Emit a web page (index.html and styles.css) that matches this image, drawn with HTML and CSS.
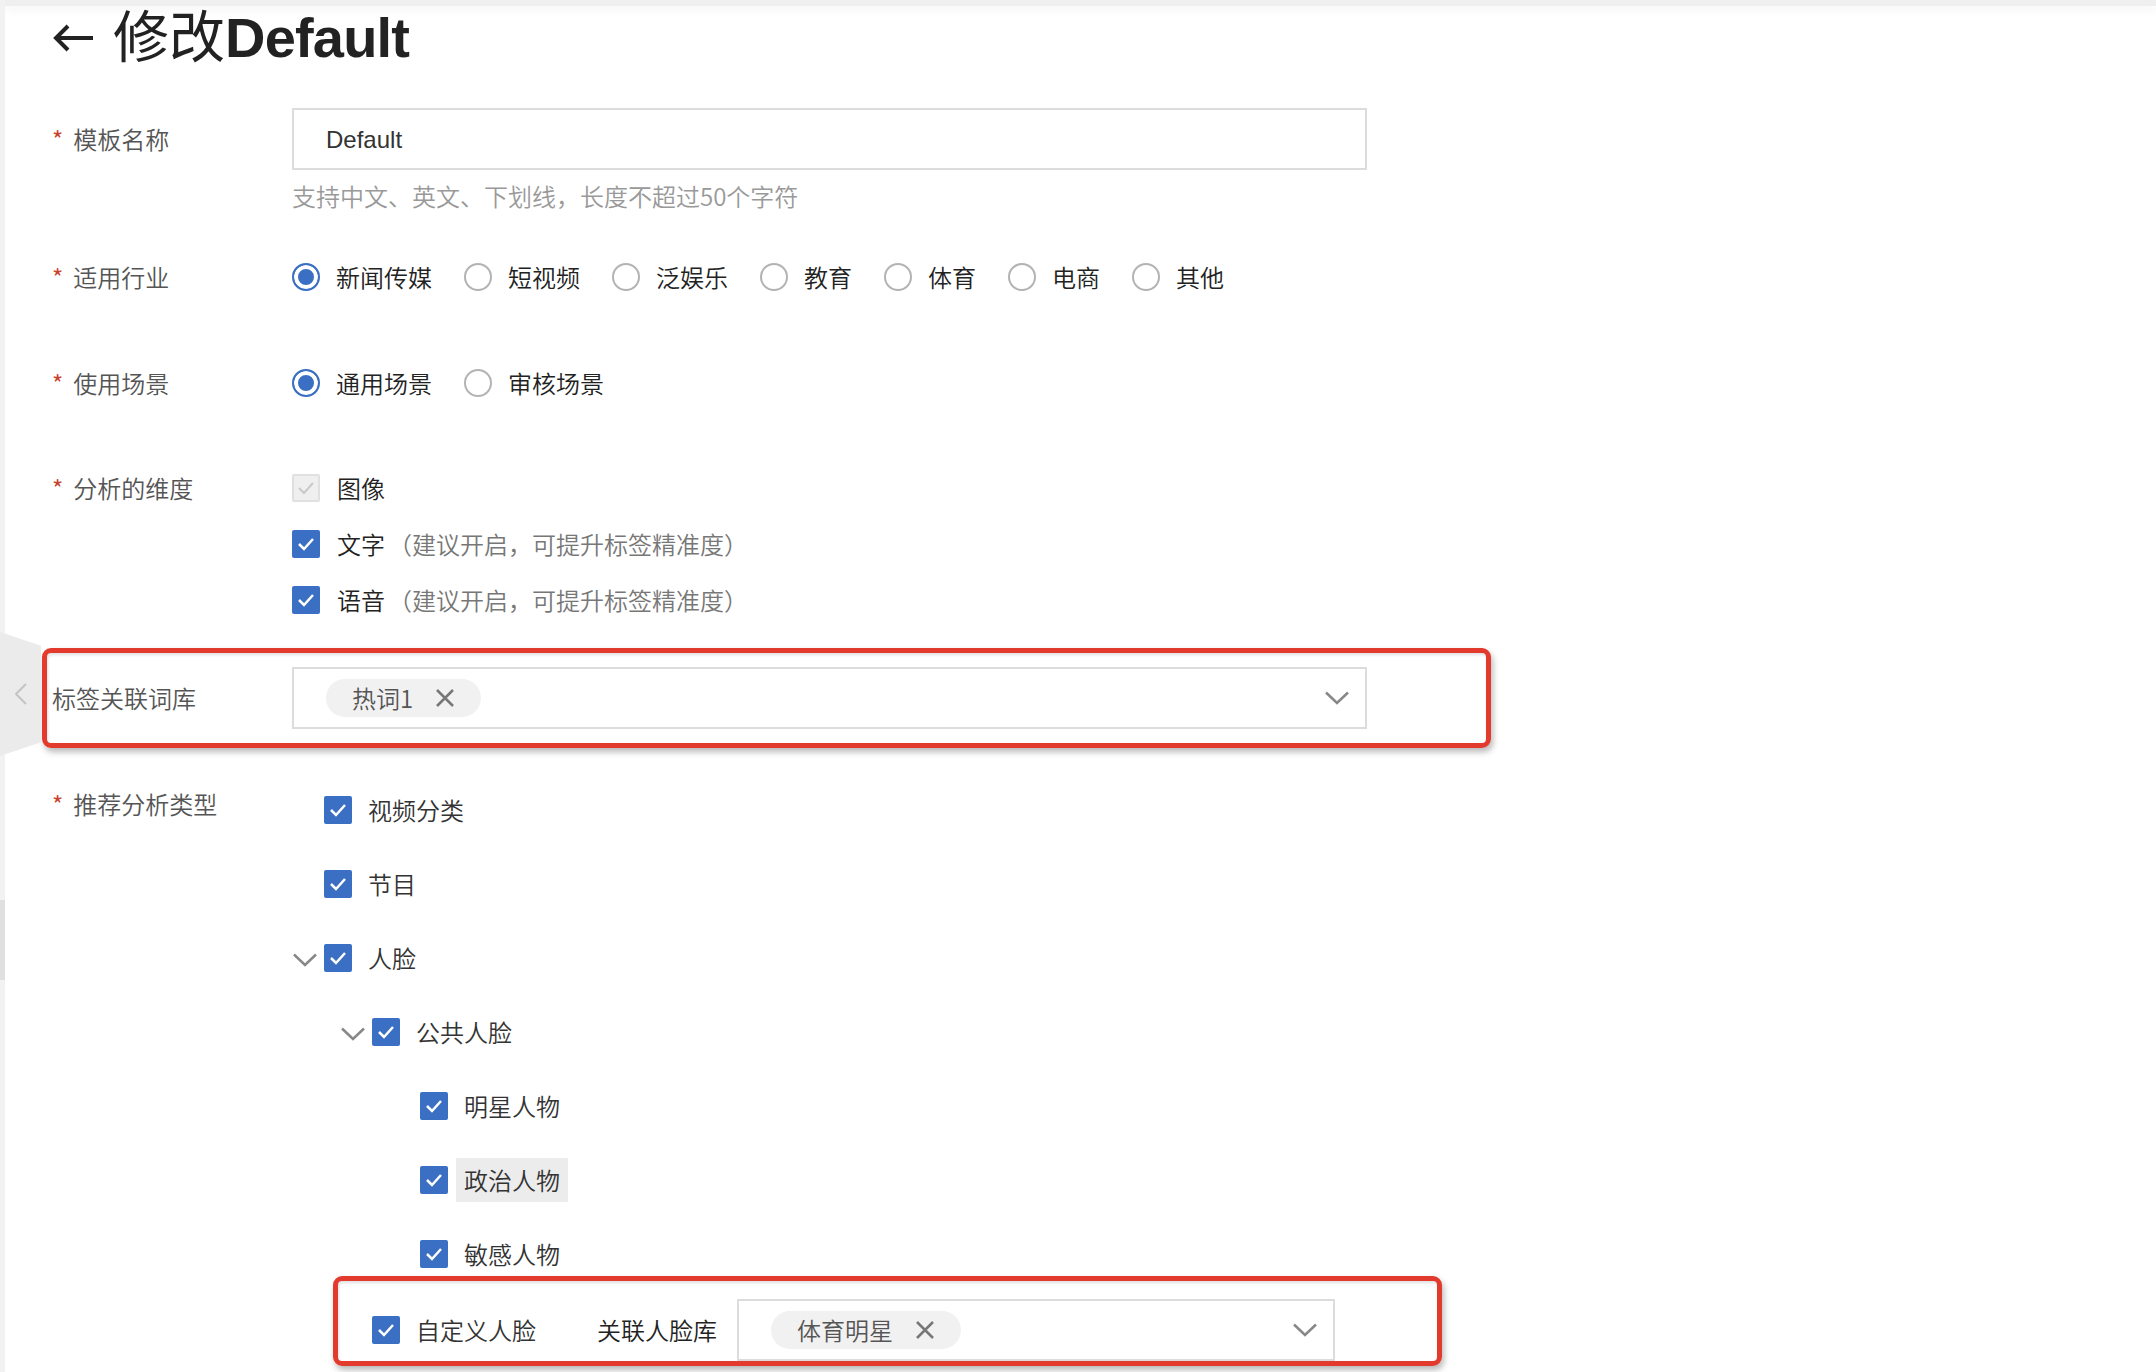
FILE: index.html
```html
<!DOCTYPE html>
<html lang="zh-CN">
<head>
<meta charset="utf-8">
<title>修改Default</title>
<link rel="stylesheet" href="styles.css">
</head>
<body>
<div class="app">
  <aside class="rail">
    <div class="rail-thumb"></div>
    <button class="rail-toggle" type="button" aria-label="收起">
      <svg width="12" height="22" viewBox="0 0 12 22"><polyline points="11,1 1,11 11,21" fill="none" stroke="#c4c4c4" stroke-width="2"/></svg>
    </button>
  </aside>
  <main class="page">
    <div class="topbar"></div>
    <header class="page-header">
      <svg class="back" viewBox="0 0 42 30"><path d="M41 15H4M16 3L4 15L16 27" fill="none" stroke="#222" stroke-width="4"/></svg>
      <h1 class="page-title"><span class="title-cn">修改</span><span class="title-en">Default</span></h1>
    </header>

    <form class="form">
      <div class="form-item item-name">
        <label class="form-label"><span class="req">*</span>模板名称</label>
        <div class="form-control">
          <div class="input">Default</div>
          <div class="help">支持中文、英文、下划线，长度不超过50个字符</div>
        </div>
      </div>

      <div class="form-item item-line item-industry">
        <label class="form-label"><span class="req">*</span>适用行业</label>
        <div class="radio-group">
          <span class="radio checked"><span class="radio-dot"></span>新闻传媒</span>
          <span class="radio"><span class="radio-dot"></span>短视频</span>
          <span class="radio"><span class="radio-dot"></span>泛娱乐</span>
          <span class="radio"><span class="radio-dot"></span>教育</span>
          <span class="radio"><span class="radio-dot"></span>体育</span>
          <span class="radio"><span class="radio-dot"></span>电商</span>
          <span class="radio"><span class="radio-dot"></span>其他</span>
        </div>
      </div>

      <div class="form-item item-line item-scene">
        <label class="form-label"><span class="req">*</span>使用场景</label>
        <div class="radio-group">
          <span class="radio checked"><span class="radio-dot"></span>通用场景</span>
          <span class="radio"><span class="radio-dot"></span>审核场景</span>
        </div>
      </div>

      <div class="form-item item-dim">
        <label class="form-label"><span class="req">*</span>分析的维度</label>
        <div class="check-list">
          <div class="check"><span class="cb disabled"><svg viewBox="0 0 18 14"><polyline points="2,7 7,12 16,2" fill="none" stroke="#c9c9c9" stroke-width="2"/></svg></span>图像</div>
          <div class="check"><span class="cb"><svg viewBox="0 0 18 14"><polyline points="2,7 7,12 16,2" fill="none" stroke="#fff" stroke-width="2.5"/></svg></span>文字<span class="hint">（建议开启，可提升标签精准度）</span></div>
          <div class="check"><span class="cb"><svg viewBox="0 0 18 14"><polyline points="2,7 7,12 16,2" fill="none" stroke="#fff" stroke-width="2.5"/></svg></span>语音<span class="hint">（建议开启，可提升标签精准度）</span></div>
        </div>
      </div>

      <div class="form-item item-lib marked">
        <label class="form-label">标签关联词库</label>
        <div class="select">
          <span class="tag">热词1<svg viewBox="0 0 20 20"><path d="M2 2L18 18M18 2L2 18" fill="none" stroke="#777" stroke-width="2.5"/></svg></span>
          <svg class="select-arrow" viewBox="0 0 24 14"><polyline points="1,1.5 12,12 23,1.5" fill="none" stroke="#888" stroke-width="2.5"/></svg>
        </div>
      </div>

      <div class="form-item item-rec">
        <label class="form-label"><span class="req">*</span>推荐分析类型</label>
        <div class="tree">
          <div class="tree-node">
            <span class="switcher"></span>
            <span class="cb"><svg viewBox="0 0 18 14"><polyline points="2,7 7,12 16,2" fill="none" stroke="#fff" stroke-width="2.5"/></svg></span>
            <span class="node-title">视频分类</span>
          </div>
          <div class="tree-node">
            <span class="switcher"></span>
            <span class="cb"><svg viewBox="0 0 18 14"><polyline points="2,7 7,12 16,2" fill="none" stroke="#fff" stroke-width="2.5"/></svg></span>
            <span class="node-title">节目</span>
          </div>
          <div class="tree-node">
            <span class="switcher"><svg viewBox="0 0 24 14"><polyline points="1,1.5 12,12 23,1.5" fill="none" stroke="#888" stroke-width="2.5"/></svg></span>
            <span class="cb"><svg viewBox="0 0 18 14"><polyline points="2,7 7,12 16,2" fill="none" stroke="#fff" stroke-width="2.5"/></svg></span>
            <span class="node-title">人脸</span>
          </div>
          <div class="tree-node lvl-1">
            <span class="switcher"><svg viewBox="0 0 24 14"><polyline points="1,1.5 12,12 23,1.5" fill="none" stroke="#888" stroke-width="2.5"/></svg></span>
            <span class="cb"><svg viewBox="0 0 18 14"><polyline points="2,7 7,12 16,2" fill="none" stroke="#fff" stroke-width="2.5"/></svg></span>
            <span class="node-title">公共人脸</span>
          </div>
          <div class="tree-node lvl-2">
            <span class="switcher"></span>
            <span class="cb"><svg viewBox="0 0 18 14"><polyline points="2,7 7,12 16,2" fill="none" stroke="#fff" stroke-width="2.5"/></svg></span>
            <span class="node-title">明星人物</span>
          </div>
          <div class="tree-node lvl-2">
            <span class="switcher"></span>
            <span class="cb"><svg viewBox="0 0 18 14"><polyline points="2,7 7,12 16,2" fill="none" stroke="#fff" stroke-width="2.5"/></svg></span>
            <span class="node-title active">政治人物</span>
          </div>
          <div class="tree-node lvl-2">
            <span class="switcher"></span>
            <span class="cb"><svg viewBox="0 0 18 14"><polyline points="2,7 7,12 16,2" fill="none" stroke="#fff" stroke-width="2.5"/></svg></span>
            <span class="node-title">敏感人物</span>
          </div>
          <div class="tree-node lvl-1 custom marked">
            <span class="switcher"></span>
            <span class="cb"><svg viewBox="0 0 18 14"><polyline points="2,7 7,12 16,2" fill="none" stroke="#fff" stroke-width="2.5"/></svg></span>
            <span class="node-title">自定义人脸</span>
            <span class="custom-label">关联人脸库</span>
            <div class="select select-small">
              <span class="tag">体育明星<svg viewBox="0 0 20 20"><path d="M2 2L18 18M18 2L2 18" fill="none" stroke="#777" stroke-width="2.5"/></svg></span>
              <svg class="select-arrow" viewBox="0 0 24 14"><polyline points="1,1.5 12,12 23,1.5" fill="none" stroke="#888" stroke-width="2.5"/></svg>
            </div>
          </div>
        </div>
      </div>
    </form>
  </main>
</div>
</body>
</html>
```

FILE: styles.css
```css
* {
  box-sizing: border-box;
}

html,
body {
  margin: 0;
  padding: 0;
}

body {
  background: #fff;
  font-family: "Noto Sans CJK SC", "Liberation Sans", sans-serif;
  font-size: 24px;
  font-weight: 350;
  color: #222;
  overflow: hidden;
  height: 1372px;
}

.app {
  display: flex;
  min-height: 1372px;
}

/* left rail */
.rail {
  width: 5px;
  flex: none;
  background: #f2f2f2;
  position: relative;
}

.rail-thumb {
  margin-top: 900px;
  height: 80px;
  background: #e0e0e0;
}

.rail-toggle {
  position: absolute;
  left: 0;
  top: 632px;
  width: 41px;
  height: 124px;
  border: 0;
  padding: 0;
  background: #ebebeb;
  clip-path: polygon(0 0, 100% 11%, 100% 89%, 0 100%);
  display: flex;
  align-items: center;
  justify-content: center;
  z-index: 2;
}

/* page */
.page {
  flex: 1;
  padding-left: 47px;
}

.topbar {
  height: 6px;
  margin-left: -47px;
  background: #efefef;
  box-shadow: 0 4px 10px rgba(0, 0, 0, 0.05);
}

.page-header {
  height: 64px;
  display: flex;
  align-items: center;
  gap: 19px;
}

.back {
  width: 42px;
  height: 30px;
  flex: none;
}

.page-title {
  margin: 0;
  font-family: "Liberation Sans", "Noto Sans CJK SC", sans-serif;
  font-size: 56px;
  line-height: 64px;
  font-weight: 400;
  color: #222;
  white-space: nowrap;
}

.title-en {
  font-weight: 700;
  letter-spacing: -0.8px;
}

/* form */
.form-item {
  display: flex;
  align-items: flex-start;
}

.form-label {
  width: 240px;
  flex: none;
  color: #555;
  white-space: nowrap;
}

.req {
  font-weight: 400;
  color: #c8432f;
  margin-right: 10px;
}

.item-name {
  margin-top: 38px;
}

.item-name .form-label,
.item-lib .form-label {
  line-height: 62px;
}

.input {
  width: 1075px;
  height: 62px;
  border: 2px solid #dcdcdc;
  padding: 0 32px;
  line-height: 60px;
  font-family: "Liberation Sans", sans-serif;
  font-weight: 400;
  color: #333;
}

.help {
  margin-top: 8px;
  line-height: 36px;
  color: #999;
}

.item-line {
  line-height: 36px;
}

.item-industry {
  margin-top: 45px;
}

.item-scene {
  margin-top: 70px;
}

.radio-group {
  display: flex;
  align-items: center;
}

.radio {
  display: flex;
  align-items: center;
  margin-right: 32px;
  color: #222;
}

.radio-dot {
  width: 28px;
  height: 28px;
  flex: none;
  border: 2px solid #b3b3b3;
  border-radius: 50%;
  margin-right: 16px;
}

.radio.checked .radio-dot {
  border-color: #3a6fc4;
  background: #3a6fc4;
  box-shadow: inset 0 0 0 4px #fff;
}

.item-dim {
  margin-top: 59px;
  line-height: 56px;
}

.check {
  display: flex;
  align-items: center;
  height: 56px;
  color: #222;
}

.cb {
  width: 28px;
  height: 28px;
  flex: none;
  background: #3a6fc4;
  border-radius: 2px;
  display: flex;
  align-items: center;
  justify-content: center;
}

.cb svg {
  width: 18px;
  height: 14px;
}

.cb.disabled {
  background: #efefef;
  border: 2px solid #e0e0e0;
}

.check .cb {
  margin-right: 17px;
}

.hint {
  color: #777;
  margin-left: 3px;
}

/* select */
.item-lib {
  margin-top: 39px;
}

.select {
  width: 1075px;
  height: 62px;
  flex: none;
  border: 2px solid #dcdcdc;
  padding: 0 16px 0 32px;
  display: flex;
  align-items: center;
  justify-content: space-between;
  background: #fff;
}

.tag {
  display: inline-flex;
  align-items: center;
  height: 38px;
  padding: 0 26px;
  border-radius: 19px;
  background: #f1f1f1;
  color: #555;
  line-height: 38px;
}

.tag svg {
  width: 20px;
  height: 20px;
  margin-left: 22px;
}

.select-arrow {
  width: 24px;
  height: 14px;
  flex: none;
}

/* red annotation frames */
.marked {
  position: relative;
}

.marked::after {
  content: "";
  position: absolute;
  border: 5px solid #e23a2c;
  border-radius: 9px;
  box-shadow: 2px 4px 6px rgba(0, 0, 0, 0.28), inset 1px 2px 3px rgba(0, 0, 0, 0.12);
  pointer-events: none;
}

.item-lib::after {
  top: -19px;
  bottom: -19px;
  left: -10px;
  width: 1439px;
}

.custom::after {
  top: -17px;
  bottom: 1px;
  left: 41px;
  width: 1099px;
}

/* tree */
.item-rec {
  margin-top: 44px;
}

.item-rec .form-label {
  margin-top: 13px;
  line-height: 36px;
}

.tree-node {
  display: flex;
  align-items: center;
  height: 74px;
  color: #333;
}

.lvl-1 {
  padding-left: 48px;
}

.lvl-2 {
  padding-left: 96px;
}

.custom {
  margin-top: 2px;
}

.switcher {
  width: 32px;
  flex: none;
  display: flex;
  align-items: center;
}

.switcher svg {
  width: 24px;
  height: 14px;
  margin-left: 1px;
  margin-top: 4px;
}

.node-title {
  margin-left: 8px;
  padding: 0 8px;
  line-height: 44px;
}

.node-title.active {
  background: #ececec;
}

.custom-label {
  margin-left: 53px;
  line-height: 44px;
  color: #222;
}

.select-small {
  width: 598px;
  margin-left: 20px;
}
```
